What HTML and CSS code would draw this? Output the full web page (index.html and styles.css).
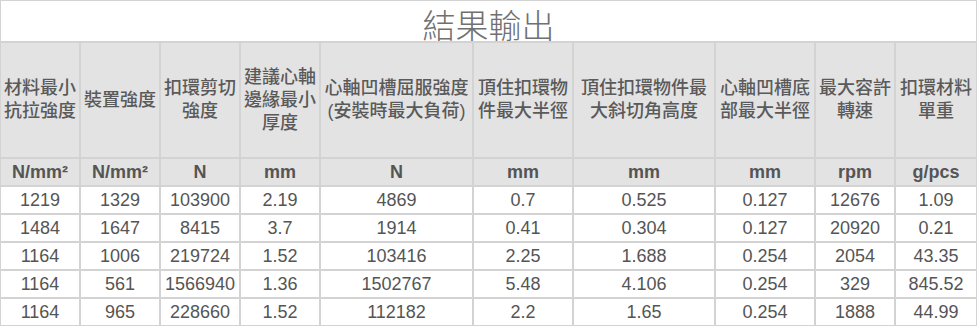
FILE: index.html
```html
<!DOCTYPE html>
<html lang="zh-Hant">
<head>
<meta charset="utf-8">
<title>結果輸出</title>
<link rel="stylesheet" href="styles.css">
</head>
<body>
<table class="result">
  <thead>
    <tr>
      <th class="title" colspan="10"><div class="title-text">結果輸出</div></th>
    </tr>
    <tr class="head">
      <th class="w80">材料最小抗拉強度</th>
      <th class="w80">裝置強度</th>
      <th class="w80">扣環剪切強度</th>
      <th class="w80">建議心軸邊緣最小厚度</th>
      <th class="w153">心軸凹槽屈服強度(安裝時最大負荷)</th>
      <th class="w100">頂住扣環物件最大半徑</th>
      <th class="w142">頂住扣環物件最大斜切角高度</th>
      <th class="w100">心軸凹槽底部最大半徑</th>
      <th class="w80">最大容許轉速</th>
      <th class="w82">扣環材料單重</th>
    </tr>
    <tr class="units">
      <th>N/mm²</th>
      <th>N/mm²</th>
      <th>N</th>
      <th>mm</th>
      <th>N</th>
      <th>mm</th>
      <th>mm</th>
      <th>mm</th>
      <th>rpm</th>
      <th>g/pcs</th>
    </tr>
  </thead>
  <tbody>
    <tr><td>1219</td><td>1329</td><td>103900</td><td>2.19</td><td>4869</td><td>0.7</td><td>0.525</td><td>0.127</td><td>12676</td><td>1.09</td></tr>
    <tr><td>1484</td><td>1647</td><td>8415</td><td>3.7</td><td>1914</td><td>0.41</td><td>0.304</td><td>0.127</td><td>20920</td><td>0.21</td></tr>
    <tr><td>1164</td><td>1006</td><td>219724</td><td>1.52</td><td>103416</td><td>2.25</td><td>1.688</td><td>0.254</td><td>2054</td><td>43.35</td></tr>
    <tr><td>1164</td><td>561</td><td>1566940</td><td>1.36</td><td>1502767</td><td>5.48</td><td>4.106</td><td>0.254</td><td>329</td><td>845.52</td></tr>
    <tr><td>1164</td><td>965</td><td>228660</td><td>1.52</td><td>112182</td><td>2.2</td><td>1.65</td><td>0.254</td><td>1888</td><td>44.99</td></tr>
  </tbody>
</table>
</body>
</html>
```
FILE: styles.css
```css
html, body {
  margin: 0;
  padding: 0;
  background: #ffffff;
}

.result {
  width: 977px;
  border-collapse: separate;
  border-spacing: 0;
  font-family: "Liberation Sans", Arial, "Noto Sans CJK TC", sans-serif;
  font-size: 18px;
  color: #555555;
}

.result th,
.result td {
  box-sizing: border-box;
  border: 1px solid #d3d3d3;
  padding: 0 2px;
  text-align: center;
  vertical-align: middle;
}

.result .title {
  height: 42px;
  padding: 0;
  background: #ffffff;
  vertical-align: top;
}

.title-text {
  height: 40px;
  font-family: "Noto Sans CJK TC", sans-serif;
  font-weight: 300;
  font-size: 33px;
  line-height: 46px;
  color: #707070;
}

.head th {
  height: 116px;
  background: #e3e3e3;
  font-weight: 500;
  line-height: 23px;
  color: #5a5a5a;
}

.units th {
  height: 28px;
  background: #e3e3e3;
  font-weight: bold;
  line-height: 26px;
}

.result td {
  height: 28px;
  line-height: 26px;
  font-weight: normal;
}

.w80 { width: 80px; }
.w82 { width: 82px; }
.w100 { width: 100px; }
.w142 { width: 142px; }
.w153 { width: 153px; }
```
